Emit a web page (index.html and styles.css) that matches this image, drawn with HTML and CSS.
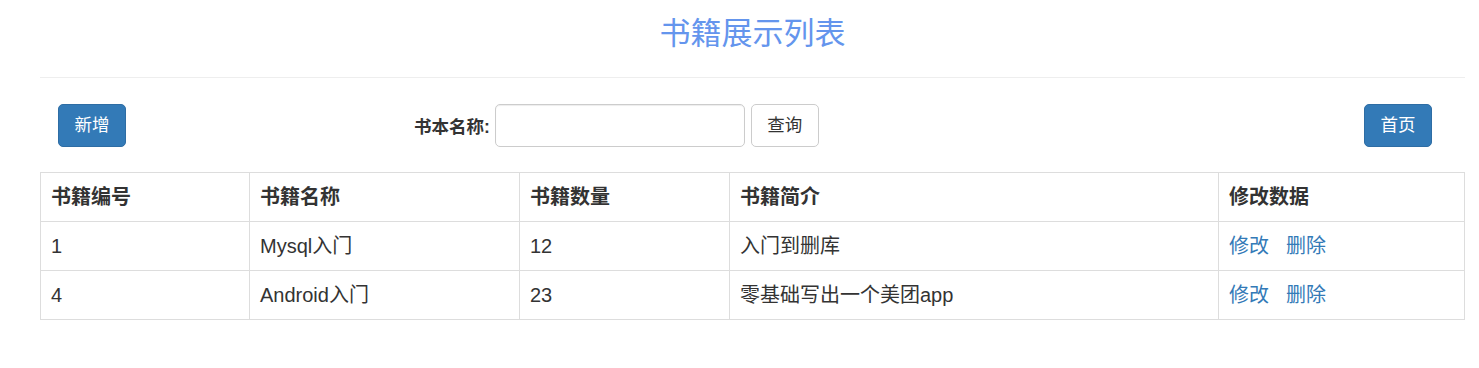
FILE: index.html
```html
<!DOCTYPE html>
<html lang="zh-CN">
<head>
    <meta charset="UTF-8">
    <title>书籍展示列表</title>
    <link rel="stylesheet" href="styles.css">
</head>
<body>
    <div class="container">
        <!-- 标题 -->
        <div class="page-header">
            <h1>书籍展示列表</h1>
        </div>

        <!-- 工具栏 -->
        <div class="toolbar">
            <a class="btn btn-primary add-btn" href="#add">新增</a>
            <form class="search-form">
                <label for="bookName">书本名称:</label>
                <input type="text" id="bookName">
                <button type="button" class="btn btn-default">查询</button>
            </form>
            <a class="btn btn-primary home-btn" href="#home">首页</a>
        </div>

        <!-- 书籍列表 -->
        <table class="book-table">
            <colgroup>
                <col style="width: 209px">
                <col style="width: 270px">
                <col style="width: 210px">
                <col style="width: 489px">
                <col>
            </colgroup>
            <thead>
                <tr>
                    <th>书籍编号</th>
                    <th>书籍名称</th>
                    <th>书籍数量</th>
                    <th>书籍简介</th>
                    <th>修改数据</th>
                </tr>
            </thead>
            <tbody>
                <tr>
                    <td>1</td>
                    <td>Mysql入门</td>
                    <td>12</td>
                    <td>入门到删库</td>
                    <td class="ops"><a href="#edit">修改</a><a href="#delete">删除</a></td>
                </tr>
                <tr>
                    <td>4</td>
                    <td>Android入门</td>
                    <td>23</td>
                    <td>零基础写出一个美团app</td>
                    <td class="ops"><a href="#edit">修改</a><a href="#delete">删除</a></td>
                </tr>
            </tbody>
        </table>
    </div>
</body>
</html>
```

FILE: styles.css
```css
/* 基础样式 */
* {
    box-sizing: border-box;
    margin: 0;
    padding: 0;
}

body {
    font-family: "Liberation Sans", "Noto Sans CJK SC", sans-serif;
    color: #333;
    background: #fff;
}

.container {
    padding: 0 14px 0 40px;
}

/* 标题 */
.page-header {
    padding: 14px 0 23px;
    border-bottom: 1px solid #eee;
    text-align: center;
}

.page-header h1 {
    font-size: 31px;
    font-weight: normal;
    line-height: 40px;
    color: #6495ed;
}

/* 按钮 */
.btn {
    display: inline-block;
    font-size: 17.5px;
    line-height: 23px;
    padding: 9px 15.5px;
    border: 1px solid transparent;
    border-radius: 5px;
    text-decoration: none;
    font-family: inherit;
    cursor: pointer;
}

.btn-primary {
    background: #337ab7;
    border-color: #2e6da4;
    color: #fff;
}

.btn-default {
    background: #fff;
    border-color: #ccc;
    color: #333;
}

/* 工具栏 */
.toolbar {
    display: flex;
    align-items: center;
    margin-top: 26px;
}

.add-btn {
    margin-left: 18px;
}

.search-form {
    display: flex;
    align-items: center;
    margin-left: 288px;
}

.search-form label {
    font-size: 17.5px;
    font-weight: bold;
}

.search-form input {
    width: 250px;
    height: 43px;
    margin-left: 5px;
    border: 1px solid #ccc;
    border-radius: 5px;
    box-shadow: inset 0 1px 1px rgba(0, 0, 0, 0.075);
    font-size: 17.5px;
    padding: 0 15px;
}

.search-form .btn {
    margin-left: 6px;
}

.home-btn {
    margin-left: auto;
    margin-right: 33px;
}

/* 表格 */
.book-table {
    width: 100%;
    margin-top: 25px;
    border-collapse: collapse;
    table-layout: fixed;
    font-size: 20px;
}

.book-table th,
.book-table td {
    border: 1px solid #ddd;
    padding: 10px 10px;
    line-height: 28px;
    text-align: left;
    white-space: nowrap;
}

.book-table th {
    font-weight: bold;
}

.ops a {
    color: #337ab7;
    text-decoration: none;
}

.ops a + a {
    margin-left: 17px;
}
```
